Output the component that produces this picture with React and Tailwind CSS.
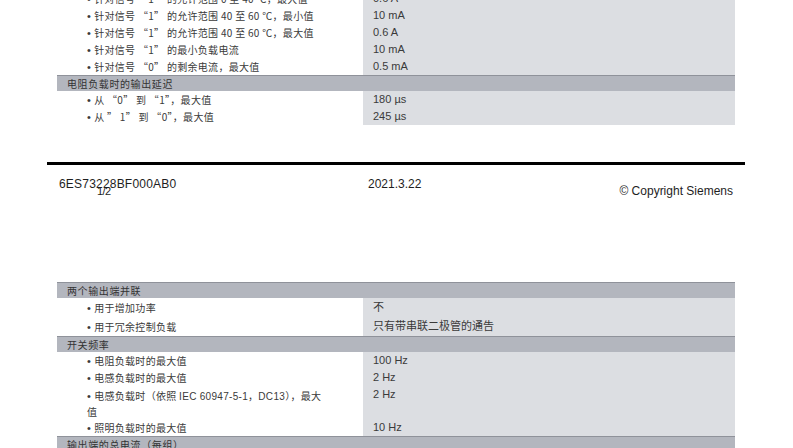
import React from "react";

const cn = "font-['Noto_Sans_CJK_SC','Liberation_Serif',serif]";
const sans = "font-['Liberation_Sans','Noto_Sans_CJK_SC',sans-serif]";

const Dot = () => <span className={`${sans} mr-[3px] text-[11px]`}>•</span>;

const Header = ({ children }) => (
  <div
    className={`h-[16px] border-t border-[#8f929a] bg-[#b3b6be] pl-[10px] ${cn} text-[10px] leading-[15px] tracking-[0.6px] text-[#333]`}
  >
    {children}
  </div>
);

const Row = ({ label, value, h = "h-[17px]", lead = "leading-[17px]", multi }) => (
  <div className={`flex ${h}`}>
    <div
      className={`w-[306px] ${cn} text-[10px] tracking-[0.3px] text-[#3a3a3a] ${
        multi ? "pl-[30px] pt-[2px] leading-[15px]" : `pl-[30px] ${lead}`
      }`}
    >
      <Dot />
      {label}
    </div>
    <div className={`flex-1 bg-[#dcdee2] pl-[10px] ${sans} text-[11px] ${lead} text-[#3a3a3a]`}>{value}</div>
  </div>
);

export default function App() {
  return (
    <div className="relative h-[448px] w-[793px] overflow-hidden bg-white">
      {/* upper table, continued from previous page */}
      <div className="-mt-[10px] ml-[57px] w-[678px]">
        <Row label="针对信号 “1” 的允许范围 0 至 40 ℃，最大值" value="0.6 A" />
        <Row label="针对信号 “1” 的允许范围 40 至 60 ℃，最小值" value="10 mA" />
        <Row label="针对信号 “1” 的允许范围 40 至 60 ℃，最大值" value="0.6 A" />
        <Row label="针对信号 “1” 的最小负载电流" value="10 mA" />
        <Row label="针对信号 “0” 的剩余电流，最大值" value="0.5 mA" />
        <Header>电阻负载时的输出延迟</Header>
        <Row label="从  “0”  到 “1”，最大值" value="180 µs" />
        <Row label="从  ” 1”  到 “0”，最大值" value="245 µs" />
      </div>

      <div className="ml-[47px] mt-[37px] h-[3px] w-[698px] bg-black" />

      {/* page footer */}
      <div className={`relative flex h-[117px] pt-[12px] ${sans} text-[12px] leading-[14px] text-[#1e1e1e]`}>
        <div className="relative w-[368px] pl-[59px] tracking-[0.2px]">
          6ES73228BF000AB0
          <span className="absolute left-[97px] top-[7px] text-[11px] tracking-[-0.6px]">1/2</span>
        </div>
        <div className="flex-1">2021.3.22</div>
        <div className="mt-[7px] pr-[60px]">© Copyright Siemens</div>
      </div>

      {/* lower table */}
      <div className="ml-[57px] w-[678px]">
        <Header>两个输出端并联</Header>
        <Row label="用于增加功率" value="不" h="h-[19px]" lead="leading-[19px]" />
        <Row label="用于冗余控制负载" value="只有带串联二极管的通告" h="h-[19px]" lead="leading-[19px]" />
        <Header>开关频率</Header>
        <Row label="电阻负载时的最大值" value="100 Hz" />
        <Row label="电感负载时的最大值" value="2 Hz" />
        <Row
          label={
            <>
              电感负载时（依照 <span className={sans}>IEC 60947-5-1，DC13</span>），最大
              <br />值
            </>
          }
          value="2 Hz"
          h="h-[33px]"
          multi
        />
        <Row label="照明负载时的最大值" value="10 Hz" />
        <Header>输出端的总电流（每组）</Header>
      </div>
    </div>
  );
}
